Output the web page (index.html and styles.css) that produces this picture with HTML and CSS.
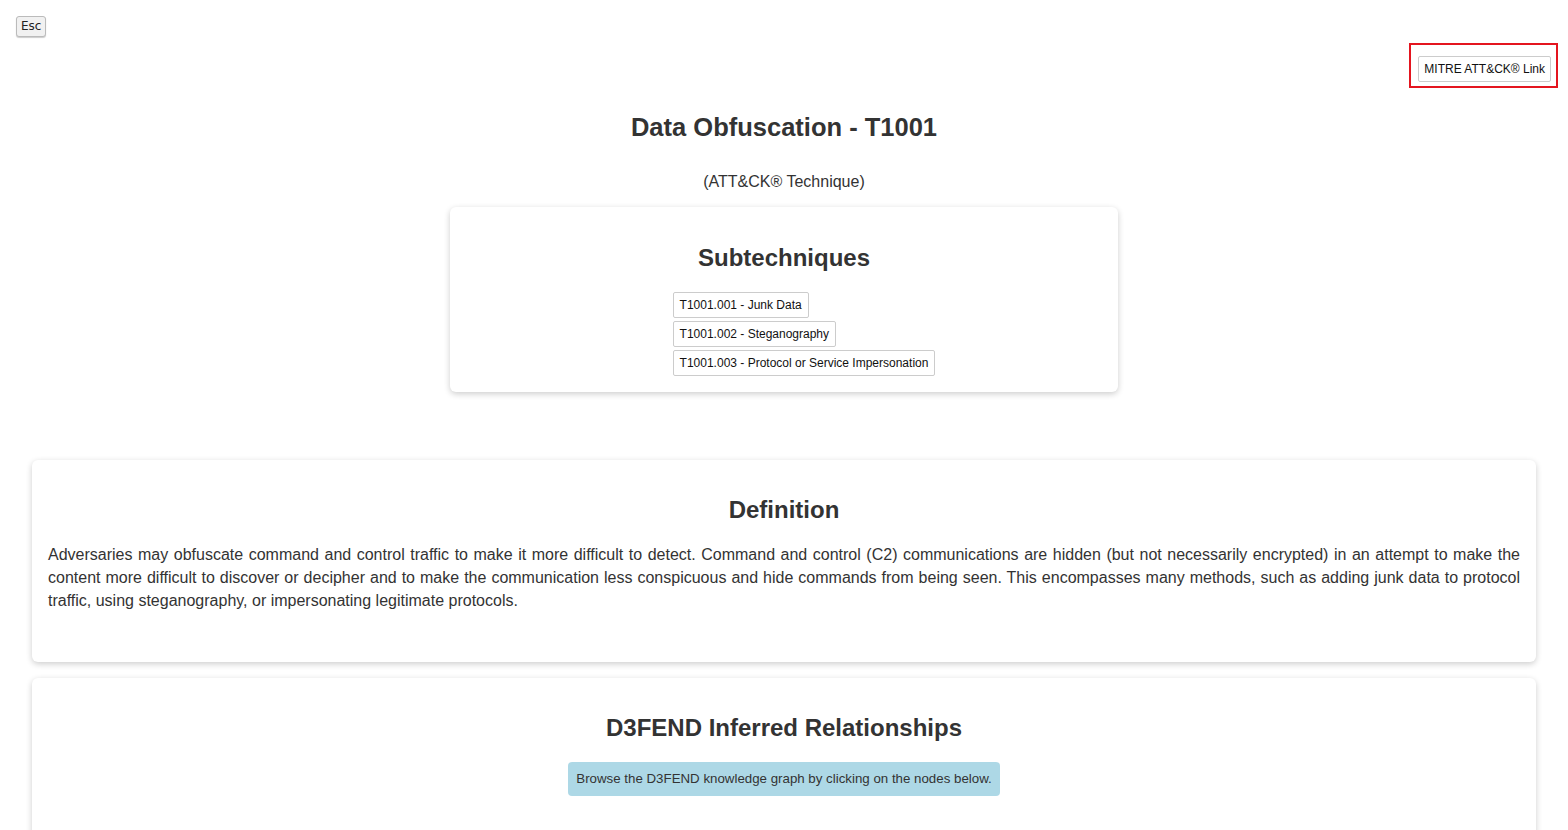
FILE: index.html
```html
<!DOCTYPE html>
<html>

<head>
    <meta charset="utf-8">
    <meta content="width=device-width, initial-scale=1" name="viewport">
    <title>Data Obfuscation - T1001</title>
    <link rel="stylesheet" href="styles.css">
</head>

<body>
    <!-- 顶部 -->
    <div class="topbar">
        <kbd class="esc">Esc</kbd>
    </div>
    <div class="external">
        <div class="external-box">
            <button class="btn link-btn">MITRE ATT&amp;CK® Link</button>
        </div>
    </div>

    <!-- 标题 -->
    <div class="header">
        <h1>Data Obfuscation - T1001</h1>
        <p class="kind">(ATT&amp;CK® Technique)</p>
    </div>

    <!-- 子技术 -->
    <div class="card subtech">
        <h2>Subtechniques</h2>
        <ul class="subtech-list">
            <li><button class="btn">T1001.001 - Junk Data</button></li>
            <li><button class="btn">T1001.002 - Steganography</button></li>
            <li><button class="btn">T1001.003 - Protocol or Service Impersonation</button></li>
        </ul>
    </div>

    <!-- 定义 -->
    <div class="card wide definition">
        <h2>Definition</h2>
        <p>Adversaries may obfuscate command and control traffic to make it more difficult to detect. Command and control (C2) communications are hidden (but not necessarily encrypted) in an attempt to make the content more difficult to discover or decipher and to make the communication less conspicuous and hide commands from being seen. This encompasses many methods, such as adding junk data to protocol traffic, using steganography, or impersonating legitimate protocols.</p>
    </div>

    <!-- 关系图 -->
    <div class="card wide relations">
        <h2>D3FEND Inferred Relationships</h2>
        <div class="info">Browse the D3FEND knowledge graph by clicking on the nodes below.</div>
    </div>
</body>

</html>
```

FILE: styles.css
```css
body {
    margin: 0;
    padding: 0;
    background-color: #fff;
    color: #333;
    font-family: "Liberation Sans", Arial, sans-serif;
    font-size: 16px;
}
/*顶部*/

.topbar {
    padding: 16px 0 0 16px;
    height: 22px;
}

.esc {
    display: inline-block;
    font-family: "DejaVu Sans", Verdana, sans-serif;
    font-size: 12px;
    line-height: 15px;
    padding: 2px 4px;
    color: #222;
    background-color: #f1f1f1;
    border: 1px solid #bbb;
    border-radius: 3px;
    box-shadow: 0 1px 1px rgba(0, 0, 0, .2);
}

.external {
    display: flex;
    justify-content: flex-end;
    padding: 5px 10px 0 0;
}

.external-box {
    border: 2px solid #e4151f;
    padding: 11px 5px 4px 7px;
}

.btn {
    font-family: "Liberation Sans", Arial, sans-serif;
    font-size: 12px;
    color: #111;
    background-color: #fff;
    border: 1px solid #ccc;
    border-radius: 2px;
    height: 26px;
    padding: 0 6px;
    margin: 0;
}

.link-btn {
    padding: 0 5px;
}
/*标题*/

.header {
    text-align: center;
}

.header h1 {
    font-size: 25.5px;
    margin: 24px 0 0;
    line-height: 30px;
}

.header .kind {
    margin: 30px 0 0;
    line-height: 20px;
}
/*卡片*/

.card {
    background-color: #fff;
    border-radius: 6px;
    box-shadow: 0 2px 6px rgba(0, 0, 0, .2);
    text-align: center;
}

.card h2 {
    font-size: 24px;
    line-height: 28px;
    margin: 0;
}

.subtech {
    width: 668px;
    margin: 15px auto 0;
    padding: 37px 0 13px;
}

.subtech-list {
    display: inline-block;
    text-align: left;
    list-style-type: none;
    margin: 20px 0 0;
    padding-left: 40px;
}

.subtech-list li {
    margin-bottom: 3px;
}

.wide {
    margin: 0 32px;
    padding: 36px 16px 16px;
}

.definition {
    margin-top: 68px;
}

.definition p {
    text-align: justify;
    line-height: 23px;
    margin: 19px 0 34px;
}

.relations {
    margin-top: 16px;
    min-height: 200px;
}

.info {
    display: inline-block;
    margin-top: 20px;
    padding: 8px 8px;
    font-size: 13.3px;
    line-height: 18px;
    background-color: #add8e6;
    border-radius: 4px;
}
```
